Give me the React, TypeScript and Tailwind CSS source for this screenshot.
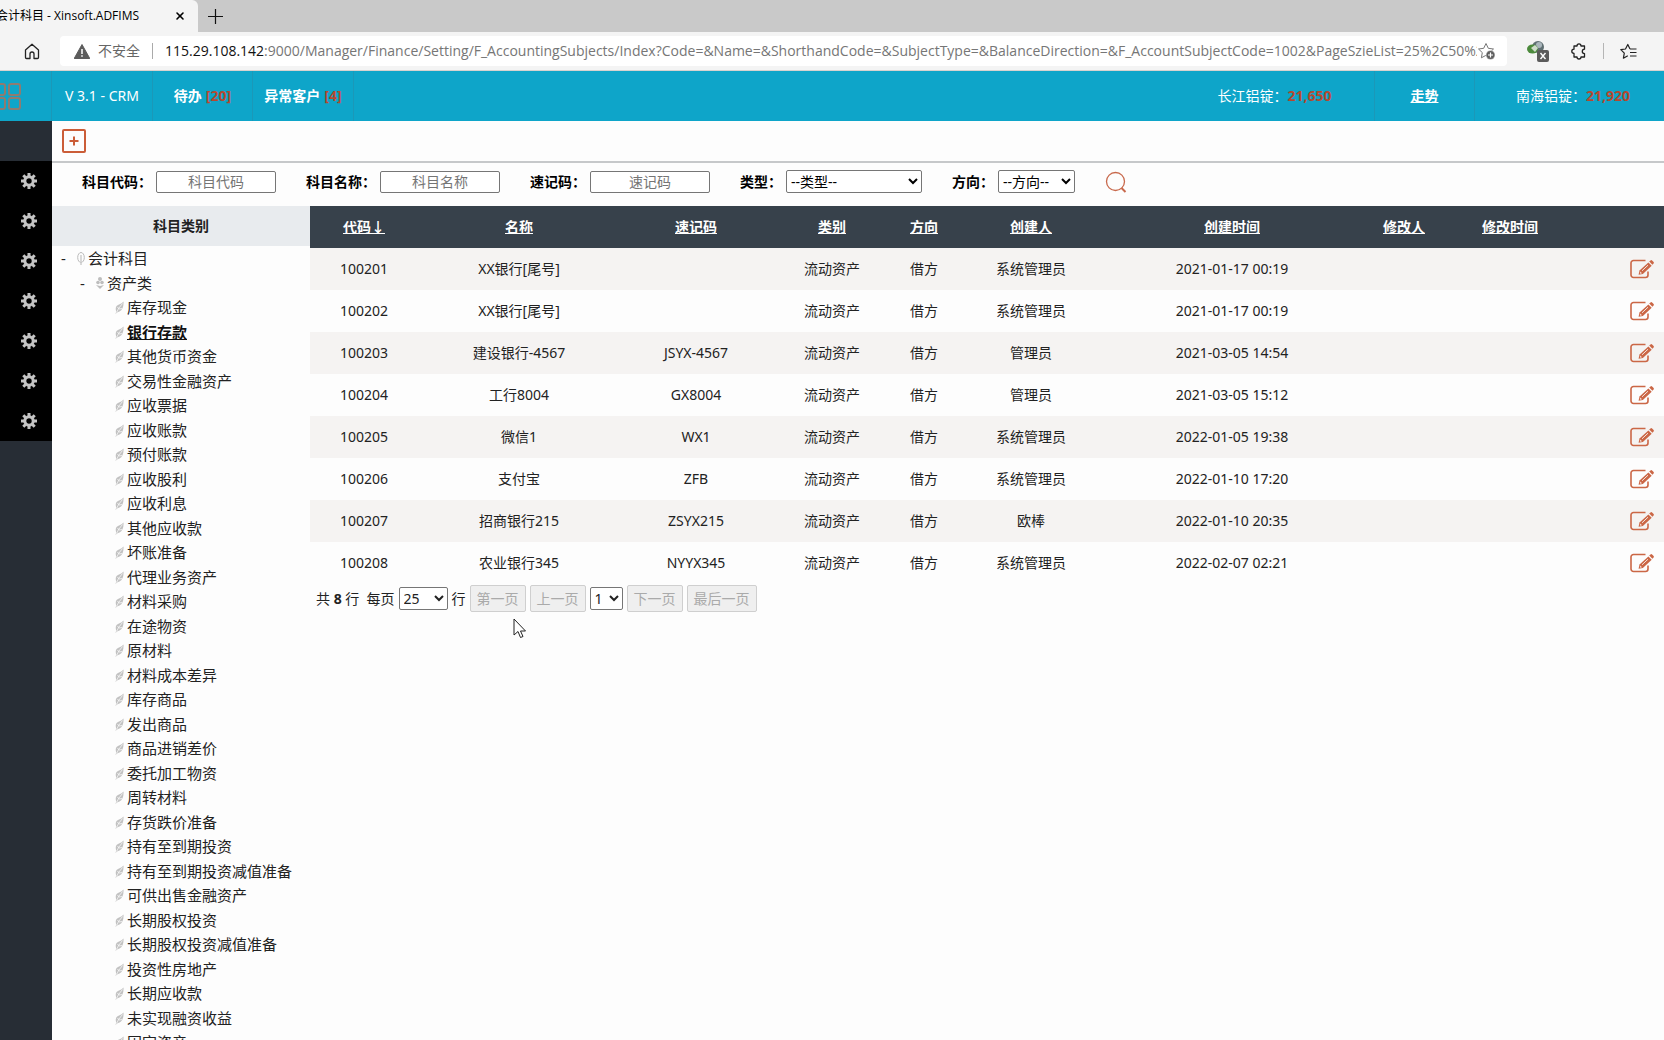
import React, { useState } from 'react';
import { IoIosSettings } from 'react-icons/io';
import { X } from 'lucide-react';

interface Subject {
  code: string;
  name: string;
  shorthand: string;
  creator: string;
  createdAt: string;
}

const SUBJECTS: Subject[] = [
  { code: '100201', name: 'XX银行[尾号]', shorthand: '', creator: '系统管理员', createdAt: '2021-01-17 00:19' },
  { code: '100202', name: 'XX银行[尾号]', shorthand: '', creator: '系统管理员', createdAt: '2021-01-17 00:19' },
  { code: '100203', name: '建设银行-4567', shorthand: 'JSYX-4567', creator: '管理员', createdAt: '2021-03-05 14:54' },
  { code: '100204', name: '工行8004', shorthand: 'GX8004', creator: '管理员', createdAt: '2021-03-05 15:12' },
  { code: '100205', name: '微信1', shorthand: 'WX1', creator: '系统管理员', createdAt: '2022-01-05 19:38' },
  { code: '100206', name: '支付宝', shorthand: 'ZFB', creator: '系统管理员', createdAt: '2022-01-10 17:20' },
  { code: '100207', name: '招商银行215', shorthand: 'ZSYX215', creator: '欧棒', createdAt: '2022-01-10 20:35' },
  { code: '100208', name: '农业银行345', shorthand: 'NYYX345', creator: '系统管理员', createdAt: '2022-02-07 02:21' },
];

const COLUMNS = ['代码↓', '名称', '速记码', '类别', '方向', '创建人', '创建时间', '修改人', '修改时间'];

const ASSETS = [
  '库存现金', '银行存款', '其他货币资金', '交易性金融资产', '应收票据', '应收账款', '预付账款', '应收股利',
  '应收利息', '其他应收款', '坏账准备', '代理业务资产', '材料采购', '在途物资', '原材料', '材料成本差异',
  '库存商品', '发出商品', '商品进销差价', '委托加工物资', '周转材料', '存货跌价准备', '持有至到期投资',
  '持有至到期投资减值准备', '可供出售金融资产', '长期股权投资', '长期股权投资减值准备', '投资性房地产',
  '长期应收款', '未实现融资收益', '固定资产',
];

const URL_PATH =
  ':9000/Manager/Finance/Setting/F_AccountingSubjects/Index?Code=&Name=&ShorthandCode=&SubjectType=&BalanceDirection=&F_AccountSubjectCode=1002&PageSzieList=25%2C50%2C...';

const STAR = 'M9 1.5l2.3 4.8 5.2.7-3.8 3.6.9 5.2L9 13.3l-4.6 2.5.9-5.2L1.5 7l5.2-.7z';

function Gear() {
  return (
    <svg width="16" height="16" viewBox="0 0 16 16" fill="none" stroke="#c4c4c4">
      <circle cx="8" cy="8" r="4.2" strokeWidth="3" />
      <path
        d="M8 0v3M8 13v3M0 8h3M13 8h3M2.3 2.3l2.2 2.2M11.5 11.5l2.2 2.2M2.3 13.7l2.2-2.2M11.5 4.5l2.2-2.2"
        strokeWidth="3"
      />
    </svg>
  );
}

function EditIcon() {
  return (
    <svg width="24" height="20" viewBox="0 0 24 20" fill="none">
      <path
        d="M15.5 1.5H3.5A2.5 2.5 0 0 0 1 4v12a2.5 2.5 0 0 0 2.5 2.5h12A2.5 2.5 0 0 0 18 16v-3.5"
        stroke="#cb6746"
        strokeWidth="1.6"
      />
      <path d="M8.6 15.8l.9-4.3L18.4 3.400l3.300 3.400-8.800 8.100z" fill="#cb6746" />
      <path d="M19.200 2.600l1.300-1.200q.8-.7 1.600 0l1.500 1.600q.7.800 0 1.500l-1.200 1.300z" fill="#cb6746" />
      <path d="M12 11.800l6-5.600" stroke="#f6e6e0" strokeWidth="1" />
      <path d="M10.200 12.500l1.800 1.700-2 .5z" fill="#f6e6e0" />
    </svg>
  );
}

function Leaf() {
  return (
    <svg className="mr-[3px] shrink-0" width="9" height="13" viewBox="0 0 9 13">
      <path d="M8.500.5Q9 8 4.500 10.500L2 11.500.5 13l.7-2.500Q-.5 5 4 3.500q3-.8 4.500-3z" fill="#c2c2c2" />
      <path d="M1.500 11.500Q3 7.500 7.500 2.500M2.500 6l1.500 2 3-.5" stroke="#fff" strokeWidth=".7" fill="none" />
    </svg>
  );
}

function BrowserBar() {
  return (
    <div className="shrink-0 bg-[#c9c9c9] font-['Open_Sans','Noto_Sans_CJK_SC',sans-serif]">
      <div className="flex h-8 items-center">
        <div className="flex h-8 w-[198px] items-center justify-between overflow-hidden rounded-tr-md bg-[#f4f4f4] pr-3">
          <span className="-ml-1 text-xs whitespace-nowrap text-black">会计科目 - Xinsoft.ADFIMS</span>
          <button aria-label="关闭标签页"><X className="h-3 w-3" strokeWidth={3.200} /></button>
        </div>
        <button className="ml-2.5" aria-label="新建标签页">
          <svg width="15" height="15" viewBox="0 0 15 15" stroke="#111" strokeWidth="1.200"><path d="M7.500 0v15M0 7.500h15" /></svg>
        </button>
      </div>
      <div className="flex h-[39px] items-center border-b border-[#d8d3d0] bg-[#f4f4f4]">
        <button className="ml-6 w-9" aria-label="主页">
          <svg width="16" height="17" viewBox="0 0 16 17" fill="none" stroke="#222" strokeWidth="1.300">
            <path d="M1.500 7L8 1.200 14.500 7v7.500q0 1-1 1H10V11q0-2-2-2t-2 2v4.500H2.500q-1 0-1-1z" strokeLinejoin="round" />
          </svg>
        </button>
        <div className="flex h-[30px] min-w-0 flex-1 items-center rounded bg-white pr-3 pl-3.5">
          <svg className="shrink-0" width="16" height="15" viewBox="0 0 16 15">
            <path d="M8 .5L15.800 14.500H.2z" fill="#5c5c5c" stroke="#5c5c5c" strokeLinejoin="round" />
            <path d="M8 5v5M8 11.200v1.600" stroke="#fff" strokeWidth="1.500" />
          </svg>
          <span className="ml-2 shrink-0 text-sm text-[#666]">不安全</span>
          <span className="mx-3 h-4 w-px shrink-0 bg-[#aaa]" />
          <span className="min-w-0 flex-1 overflow-hidden text-sm whitespace-nowrap text-[#767676]">
            <span className="text-[#111]">115.29.108.142</span>{URL_PATH}
          </span>
          <button className="shrink-0" aria-label="添加到收藏夹">
            <svg width="18" height="18" viewBox="0 0 18 18" fill="none" stroke="#777">
              <path d={STAR} />
              <circle cx="13.500" cy="13" r="4.500" fill="#5f5f5f" stroke="#fff" strokeWidth=".5" />
              <path d="M13.500 10.500v5M11 13h5" stroke="#fff" strokeWidth="1.200" />
            </svg>
          </button>
        </div>
        <div className="flex w-[157px] shrink-0 items-center">
          <button className="ml-5" aria-label="下载管理器">
            <svg width="22" height="22" viewBox="0 0 22 22">
              <circle cx="11" cy="7" r="6" fill="#5f6f72" />
              <circle cx="12" cy="5" r="3" fill="#aab6bc" />
              <ellipse cx="5.500" cy="9" rx="5.500" ry="4.500" fill="#4c8a3c" />
              <path d="M4 8l4-3 3 3-3 4z" fill="#cfdccb" />
              <rect x="10" y="10" width="12" height="12" rx="2" fill="#5b5b5b" />
              <path d="M13.500 13l5 6M18.500 13l-5 6" stroke="#fff" strokeWidth="1.400" />
            </svg>
          </button>
          <button className="ml-[22px]" aria-label="扩展">
            <svg width="16" height="17" viewBox="0 0 16 17" fill="none" stroke="#222" strokeWidth="1.300">
              <path d="M3 3h3q0-2.200 2-2.200T10 3h3.500v3.200q-2.200.2-2.200 2.200t2.200 2.200V14H10q0 2-2 2t-2-2H3v-3.500Q.8 10.300.8 8.300T3 6.200z" strokeLinejoin="round" />
            </svg>
          </button>
          <span className="ml-4 h-4 w-px bg-[#b5b5b5]" />
          <button className="ml-4" aria-label="收藏夹">
            <svg width="17" height="17" viewBox="0 0 17 17" fill="none" stroke="#222" strokeWidth="1.200">
              <path d="M10 6L7.800 1.500 5.500 6 .8 6.700l3.500 3.500-.9 5 4.400-2.400" strokeLinejoin="round" />
              <path d="M10 6h6.500M10 9.500h6.500M10 13h6.500" />
            </svg>
          </button>
        </div>
      </div>
    </div>
  );
}

function AppHeader() {
  return (
    <header className="flex h-[50px] shrink-0 items-stretch bg-[#0ea5c9] text-sm text-white">
      <div className="flex w-[52px] shrink-0 items-center border-r border-[#1b98b8]">
        <svg width="21" height="27" viewBox="0 0 21 27" fill="none" stroke="#8f7b70" strokeWidth="2">
          <rect x="-6" y="1" width="11" height="11" rx="2" />
          <rect x="9" y="1" width="11" height="11" rx="2" />
          <rect x="-6" y="15" width="11" height="11" rx="2" />
          <rect x="9" y="15" width="11" height="11" rx="2" />
        </svg>
      </div>
      <div className="flex w-[101px] shrink-0 items-center justify-center border-r border-[#1b98b8]">V 3.1 - CRM</div>
      <a href="#todo" className="flex w-[100px] shrink-0 items-center justify-center gap-1 border-r border-[#1b98b8] font-bold">
        待办 <span className="text-[#b5482f]">[20]</span>
      </a>
      <a href="#abnormal" className="flex w-[101px] shrink-0 items-center justify-center gap-1 border-r border-[#1b98b8] font-bold">
        异常客户 <span className="text-[#b5482f]">[4]</span>
      </a>
      <div className="flex-1" />
      <div className="flex w-[200px] shrink-0 items-center justify-center border-r border-[#1b98b8]">
        长江铝锭：<b className="text-[#b5482f]">21,650</b>
      </div>
      <div className="flex w-[100px] shrink-0 items-center justify-center border-r border-[#1b98b8]">
        <a href="#trend" className="font-bold underline">走势</a>
      </div>
      <div className="flex w-[189px] shrink-0 items-center pl-[41px]">
        南海铝锭：<b className="text-[#b5482f]">21,920</b>
      </div>
    </header>
  );
}

function FilterBar() {
  const inputs = ['科目代码', '科目名称', '速记码'];
  return (
    <form className="flex h-[43px] shrink-0 items-center gap-[30px] pb-1.5 pl-[30px] text-sm text-black">
      {inputs.map((label) => (
        <label key={label} className="flex items-center gap-1 font-bold whitespace-nowrap">
          {label}：
          <input
            placeholder={label}
            className="h-[22px] w-[120px] rounded-xs border border-[#767676] bg-white text-center font-normal placeholder:text-[#757575]"
          />
        </label>
      ))}
      <label className="flex items-center gap-1 font-bold whitespace-nowrap">
        类型：
        <select className="h-[23px] w-[136px] rounded-xs border border-[#767676] bg-white font-normal">
          <option>--类型--</option>
        </select>
      </label>
      <label className="flex items-center gap-1 font-bold whitespace-nowrap">
        方向：
        <select className="h-[23px] w-[77px] rounded-xs border border-[#767676] bg-white font-normal">
          <option>--方向--</option>
        </select>
      </label>
      <button type="button" aria-label="搜索">
        <svg width="22" height="22" viewBox="0 0 22 22" fill="none" stroke="#c8694c" strokeWidth="1.300">
          <circle cx="10.500" cy="10.500" r="9" />
          <path d="M16.500 17l4 4" strokeWidth="2" />
        </svg>
      </button>
    </form>
  );
}

function SubjectTree() {
  const [selected, setSelected] = useState('银行存款');
  return (
    <aside className="w-[258px] shrink-0 text-[15px] text-[#222]">
      <h2 className="flex h-10 items-center justify-center bg-[#e8ebee] text-sm font-bold">科目类别</h2>
      <div className="flex h-[25px] items-center pl-[9px]">
        <span className="w-4">-</span>
        <svg className="mr-[3px]" width="8" height="13" viewBox="0 0 8 13">
          <ellipse cx="4" cy="5.500" rx="3.300" ry="5" fill="none" stroke="#bbb" />
          <path d="M4 3v10" stroke="#ccc" strokeWidth="1.500" />
        </svg>
        会计科目
      </div>
      <div className="flex h-6 items-center pl-7">
        <span className="w-4">-</span>
        <svg className="mr-[3px]" width="8" height="12" viewBox="0 0 8 12" fill="#bdbdbd">
          <circle cx="4" cy="2" r="2" />
          <circle cx="2" cy="5.500" r="1.800" />
          <circle cx="6" cy="5.500" r="1.800" />
          <path d="M0 8l4 1 4-1-4 4z" />
        </svg>
        资产类
      </div>
      <ul>
        {ASSETS.map((name) => (
          <li key={name} className="flex odd:h-[25px] even:h-6 items-center pl-[63px]">
            <Leaf />
            <button
              onClick={() => setSelected(name)}
              className={name === selected ? 'font-bold text-[#111] underline' : ''}
            >
              {name}
            </button>
          </li>
        ))}
      </ul>
    </aside>
  );
}

function Pager() {
  const pageButton = 'h-[27px] rounded-xs border border-[#cfcfcf] bg-[#efefef] px-1.5 text-[#aaa] whitespace-nowrap';
  return (
    <div className="flex items-center gap-1 pt-px pl-1.5 text-sm text-[#222]">
      <span>共 <b>8</b> 行&nbsp; 每页</span>
      <label className="flex items-center gap-1">
        <select aria-label="每页行数" className="h-[23px] w-[49px] rounded-xs border border-[#767676] bg-white">
          <option>25</option>
        </select>
        行
      </label>
      <button disabled className={pageButton}>第一页</button>
      <button disabled className={pageButton}>上一页</button>
      <select aria-label="页码" className="h-[23px] w-[33px] rounded-xs border border-[#767676] bg-white">
        <option>1</option>
      </select>
      <button disabled className={pageButton}>下一页</button>
      <button disabled className={pageButton}>最后一页</button>
    </div>
  );
}

function SubjectTable() {
  return (
    <div className="min-w-0 flex-1">
      <table className="w-full table-fixed border-collapse text-center text-sm text-[#222]">
        <colgroup>
          <col className="w-[108px]" />
          <col className="w-[202px]" />
          <col className="w-[152px]" />
          <col className="w-[120px]" />
          <col className="w-[64px]" />
          <col className="w-[150px]" />
          <col className="w-[252px]" />
          <col className="w-[92px]" />
          <col className="w-[120px]" />
          <col className="w-[94px]" />
        </colgroup>
        <thead>
          <tr className="h-[42px] bg-[#37414b] text-white">
            {COLUMNS.map((title) => (
              <th key={title}><a href="#sort" className="underline">{title}</a></th>
            ))}
            <th />
          </tr>
        </thead>
        <tbody>
          {SUBJECTS.map((s) => (
            <tr key={s.code} className="h-[42px] odd:bg-[#f5f3f2]">
              <td>{s.code}</td>
              <td>{s.name}</td>
              <td>{s.shorthand}</td>
              <td>流动资产</td>
              <td>借方</td>
              <td>{s.creator}</td>
              <td>{s.createdAt}</td>
              <td />
              <td />
              <td className="pr-2.5">
                <button className="float-right" aria-label="编辑"><EditIcon /></button>
              </td>
            </tr>
          ))}
        </tbody>
      </table>
      <Pager />
    </div>
  );
}

export default function App() {
  return (
    <div className="relative flex h-screen flex-col overflow-hidden bg-[#fdfdfd] font-['Noto_Sans','Noto_Sans_CJK_SC',sans-serif]">
      <BrowserBar />
      <AppHeader />
      <div className="flex min-h-0 flex-1">
        <nav className="w-[52px] shrink-0 bg-[#272d35] pt-10">
          {[0, 1, 2, 3, 4, 5, 6].map((i) => (
            <button key={i} className="flex h-10 w-full items-center bg-black pl-[21px]" aria-label="设置">
              <Gear />
            </button>
          ))}
        </nav>
        <main className="flex min-w-0 flex-1 flex-col">
          <div className="flex h-[42px] shrink-0 items-center border-b-2 border-[#c6c8ca] pl-2.5">
            <button aria-label="新增">
              <svg width="24" height="24" viewBox="0 0 24 24" fill="none" stroke="#cb5d38" strokeWidth="2">
                <rect x="1" y="1" width="22" height="22" rx="1" />
                <path d="M12 7.500v9M7.500 12h9" />
              </svg>
            </button>
          </div>
          <FilterBar />
          <div className="flex min-h-0 flex-1">
            <SubjectTree />
            <SubjectTable />
          </div>
        </main>
      </div>
      <svg className="absolute top-[618px] left-[513px]" width="14" height="22" viewBox="0 0 14 22">
        <path d="M1 1v16l4-3.500 2.500 6 2.500-1-2.500-5.500h5z" fill="#fff" stroke="#222" />
      </svg>
    </div>
  );
}
